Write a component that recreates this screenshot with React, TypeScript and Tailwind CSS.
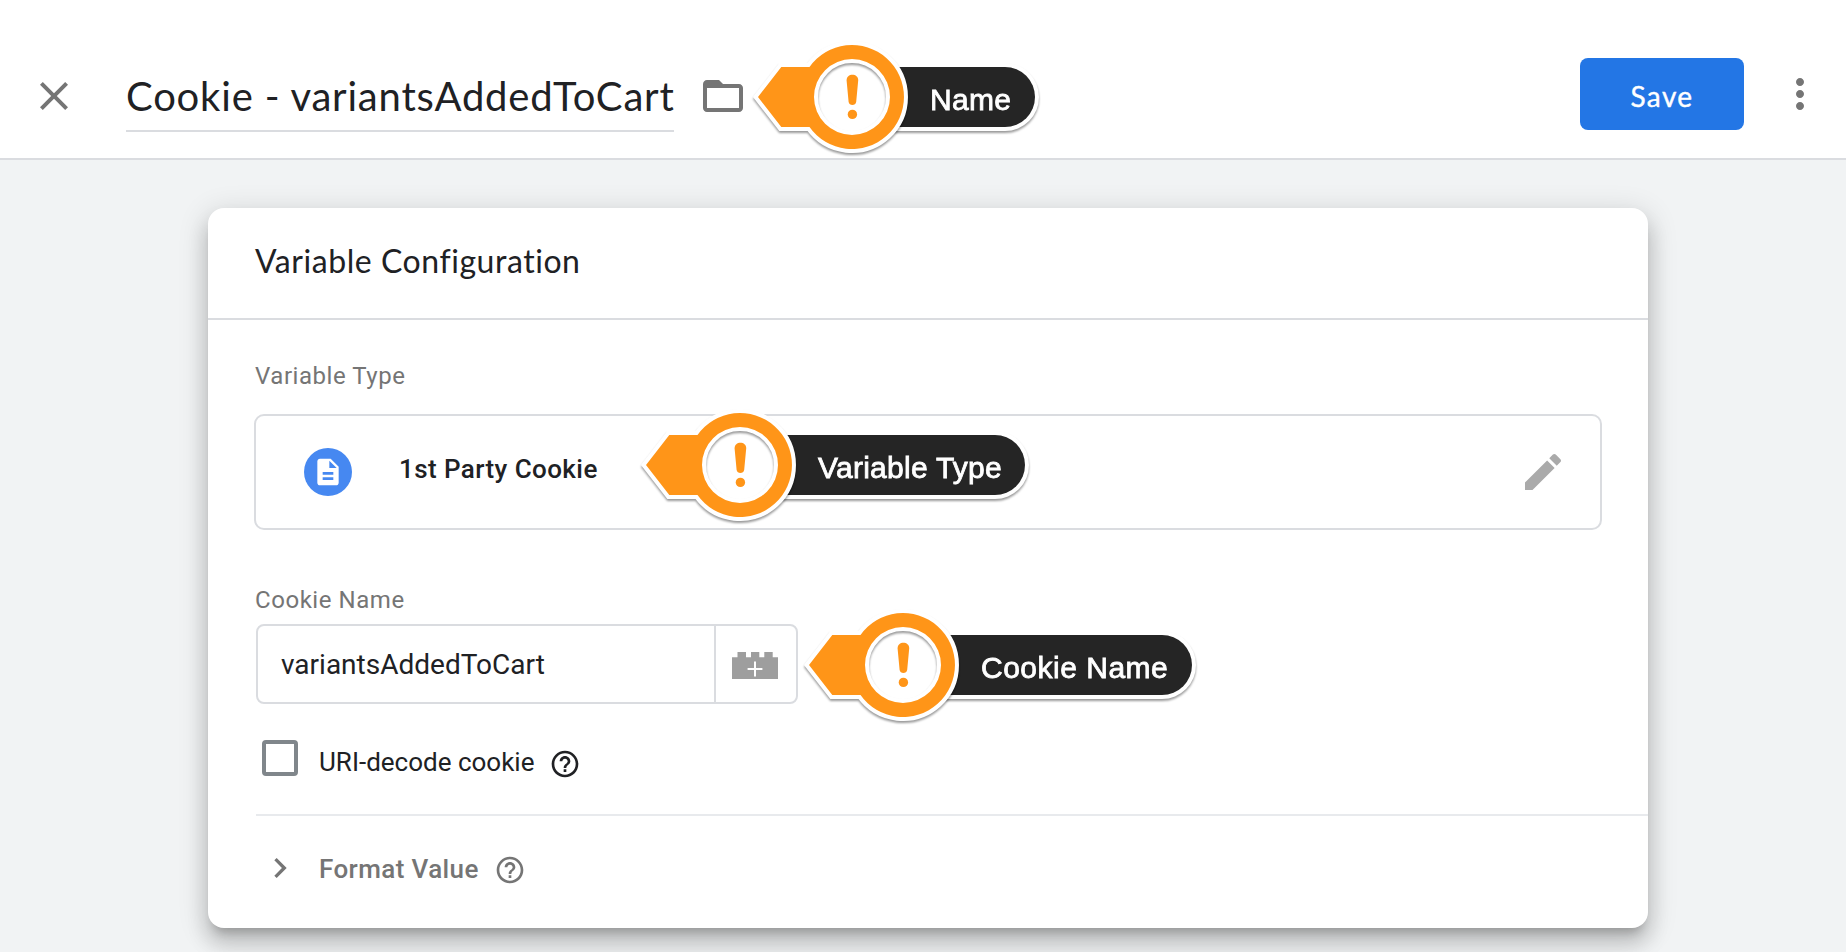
import React from "react";

type IconProps = { d: string; className: string };

function Icon({ d, className }: IconProps) {
  return (
    <svg viewBox="0 0 24 24" className={className} fill="currentColor" aria-hidden="true">
      <path d={d} />
    </svg>
  );
}

const CLOSE = "M19 6.41L17.59 5 12 10.59 6.41 5 5 6.41 10.59 12 5 17.59 6.41 19 12 13.41 17.59 19 19 17.59 13.41 12z";
const FOLDER =
  "M20 6h-8l-2-2H4c-1.1 0-1.99.9-1.99 2L2 18c0 1.1.9 2 2 2h16c1.1 0 2-.9 2-2V8c0-1.1-.9-2-2-2zm0 12H4V8h16v10z";
const MORE =
  "M12 8c1.1 0 2-.9 2-2s-.9-2-2-2-2 .9-2 2 .9 2 2 2zm0 2c-1.1 0-2 .9-2 2s.9 2 2 2 2-.9 2-2-.9-2-2-2zm0 6c-1.1 0-2 .9-2 2s.9 2 2 2 2-.9 2-2-.9-2-2-2z";
const DOC =
  "M14 2H6c-1.1 0-1.99.9-1.99 2L4 20c0 1.1.89 2 1.99 2H18c1.1 0 2-.9 2-2V8l-6-6zm2 16H8v-2h8v2zm0-4H8v-2h8v2zm-3-5V3.5L18.5 9H13z";
const EDIT =
  "M3 17.25V21h3.75L17.81 9.94l-3.75-3.75L3 17.25zM20.71 7.04c.39-.39.39-1.02 0-1.41l-2.34-2.34c-.39-.39-1.02-.39-1.41 0l-1.83 1.83 3.75 3.75 1.83-1.83z";
const HELP =
  "M11 18h2v-2h-2v2zm1-16C6.48 2 2 6.48 2 12s4.48 10 10 10 10-4.48 10-10S17.52 2 12 2zm0 18c-4.41 0-8-3.59-8-8s3.59-8 8-8 8 3.59 8 8-3.59 8-8 8zm0-14c-2.21 0-4 1.79-4 4h2c0-1.1.9-2 2-2s2 .9 2 2c0 2-3 1.75-3 5h2c0-2.25 3-2.5 3-5 0-2.21-1.79-4-4-4z";
const CHEVRON = "M10 6L8.59 7.41 13.17 12l-4.58 4.59L10 18l6-6z";

function Callout({ label, className, pill }: { label: string; className: string; pill: string }) {
  return (
    <div className={`absolute h-[120px] w-[160px] ${className}`}>
      <div
        className={`absolute left-[100px] top-[30px] flex h-[60px] items-center rounded-r-full bg-[#252525] pl-[78px] pt-1.5 font-['Liberation_Sans',Arial,sans-serif] text-[30px] leading-[34px] whitespace-nowrap text-white ring-4 ring-white drop-shadow-[0_2px_1px_rgba(0,0,0,0.4)] [-webkit-text-stroke:0.8px_white] ${pill}`}
      >
        {label}
      </div>
      <svg viewBox="-100 -60 160 120" className="absolute inset-0 h-[120px] w-[160px] overflow-visible" aria-hidden="true">
        <circle r="37" fill="#fff" />
        <path
          d="M-94 0L-70.7-30H-42.5A52 52 0 1 1-42.5 30H-70.7ZM-38 0A38 38 0 1 0 38 0A38 38 0 1 0-38 0Z"
          fill="#ff9518"
          fillRule="evenodd"
          stroke="#fff"
          strokeWidth="8"
          className="drop-shadow-[0_2px_1px_rgba(0,0,0,0.4)] [paint-order:stroke]"
        />
        <path d="M-5.4-16.5C-5.8-24.2 6.6-24.2 6.2-16.5L4.2 4.8C3.7 9.2-2.9 9.2-3.4 4.8Z" fill="#ff9518" />
        <circle cx="0.4" cy="17.4" r="4.7" fill="#ff9518" />
      </svg>
    </div>
  );
}

export default function App() {
  return (
    <div className="relative h-[952px] w-[1846px] overflow-hidden bg-[#f1f3f4] font-[Roboto,sans-serif] text-[#202124]">
      <header className="flex h-40 items-start border-b-2 border-[#dadce0] bg-white pl-[30px] pr-[22px]">
        <button className="mt-[72px] text-[#757575]" aria-label="Close">
          <Icon d={CLOSE} className="size-12" />
        </button>
        <h1 className="ml-12 mt-[70px] w-[548px] border-b-2 border-[#dadce0] pt-0.5 pb-2.5 font-[Lato,sans-serif] text-[40px] leading-[48px] tracking-[0.81px] whitespace-nowrap">
          Cookie - variantsAddedToCart
        </h1>
        <button className="ml-[25px] mt-[72px] text-[#757575]" aria-label="Folder">
          <Icon d={FOLDER} className="size-12" />
        </button>
        <button className="ml-auto mt-[58px] h-[72px] w-[164px] rounded-lg bg-[#2376e5] pt-[3px] font-[Lato,sans-serif] text-[28px] leading-[34px] tracking-[1.4px] text-white [-webkit-text-stroke:0.4px_white]">
          Save
        </button>
        <button className="ml-8 mt-[70px] text-[#757575]" aria-label="More">
          <Icon d={MORE} className="size-12" />
        </button>
      </header>

      <main className="px-[208px] pt-12">
        <section className="h-[720px] w-[1440px] rounded-2xl bg-white shadow-[0_10px_10px_-6px_rgba(0,0,0,0.2),0_16px_20px_2px_rgba(0,0,0,0.14),0_6px_28px_4px_rgba(0,0,0,0.12)]">
          <h2 className="h-28 border-b-2 border-[#dadce0] pl-[47px] pt-[33px] font-[Lato,sans-serif] text-[32px] leading-[40px] tracking-[0.55px] [font-variant-ligatures:none]">
            Variable Configuration
          </h2>

          <div className="flex flex-col pl-[46px] pt-10">
            <div className="pl-px text-2xl leading-8 tracking-[0.55px] text-[#757575]">Variable Type</div>
            <div className="mt-[22px] flex h-[116px] w-[1348px] items-center rounded-[10px] border-2 border-[#dadce0] pl-12 pr-[33px]">
              <span className="flex size-12 items-center justify-center rounded-full bg-[#4688f1] pr-px text-white">
                <Icon d={DOC} className="size-8" />
              </span>
              <span className="-mt-1.5 ml-[47px] text-[26px] leading-8 font-medium tracking-[0.42px]">1st Party Cookie</span>
              <Icon d={EDIT} className="ml-auto size-12 text-[#aaaaaa]" />
            </div>

            <div className="mt-[54px] pl-px text-2xl leading-8 tracking-[0.55px] text-[#757575]">Cookie Name</div>
            <div className="ml-0.5 mt-2 flex h-20 w-[542px] rounded-lg border-2 border-[#dadce0]">
              <div className="flex w-[456px] items-center pl-[23px] pt-0.5 text-[28px] leading-8">variantsAddedToCart</div>
              <button className="flex flex-1 items-center justify-center border-l-2 border-[#dadce0] pr-0.5" aria-label="Insert variable">
                <svg viewBox="0 0 46 28" className="mt-1 h-7 w-[46px]" aria-hidden="true">
                  <path d="M0 5.3H5.5V0H14V5.3H19V0H27.3V5.3H32.3V0H40.7V5.3H46V27H0Z" fill="#9e9e9e" />
                  <path d="M15.6 17H30.4M23 9.5V24.5" stroke="#fff" strokeWidth="2" />
                </svg>
              </button>
            </div>

            <div className="ml-2 mt-9 flex h-9 items-start">
              <span className="size-9 rounded border-4 border-[#80868b]" />
              <span className="ml-[21px] mt-1.5 w-[215px] text-[26px] leading-8 whitespace-nowrap">URI-decode cookie</span>
              <Icon d={HELP} className="ml-[15px] mt-2 size-8" />
            </div>

            <div className="ml-0.5 mt-[38px] h-0.5 bg-[#e8eaed]" />

            <div className="ml-1.5 mt-8 flex items-start text-[#757575]">
              <Icon d={CHEVRON} className="size-10" />
              <span className="ml-[19px] mt-[5px] w-[160px] text-[26px] leading-8 font-medium tracking-[0.4px] whitespace-nowrap">
                Format Value
              </span>
              <Icon d={HELP} className="ml-[15px] mt-1.5 size-8" />
            </div>
          </div>
        </section>
      </main>

      <Callout label="Name" className="left-[752px] top-[37px]" pill="w-[183px] tracking-[0.3px]" />
      <Callout label="Variable Type" className="left-[640px] top-[405px]" pill="w-[285px] tracking-[0.25px]" />
      <Callout label="Cookie Name" className="left-[803px] top-[605px]" pill="w-[289px] tracking-[0.5px]" />
    </div>
  );
}
